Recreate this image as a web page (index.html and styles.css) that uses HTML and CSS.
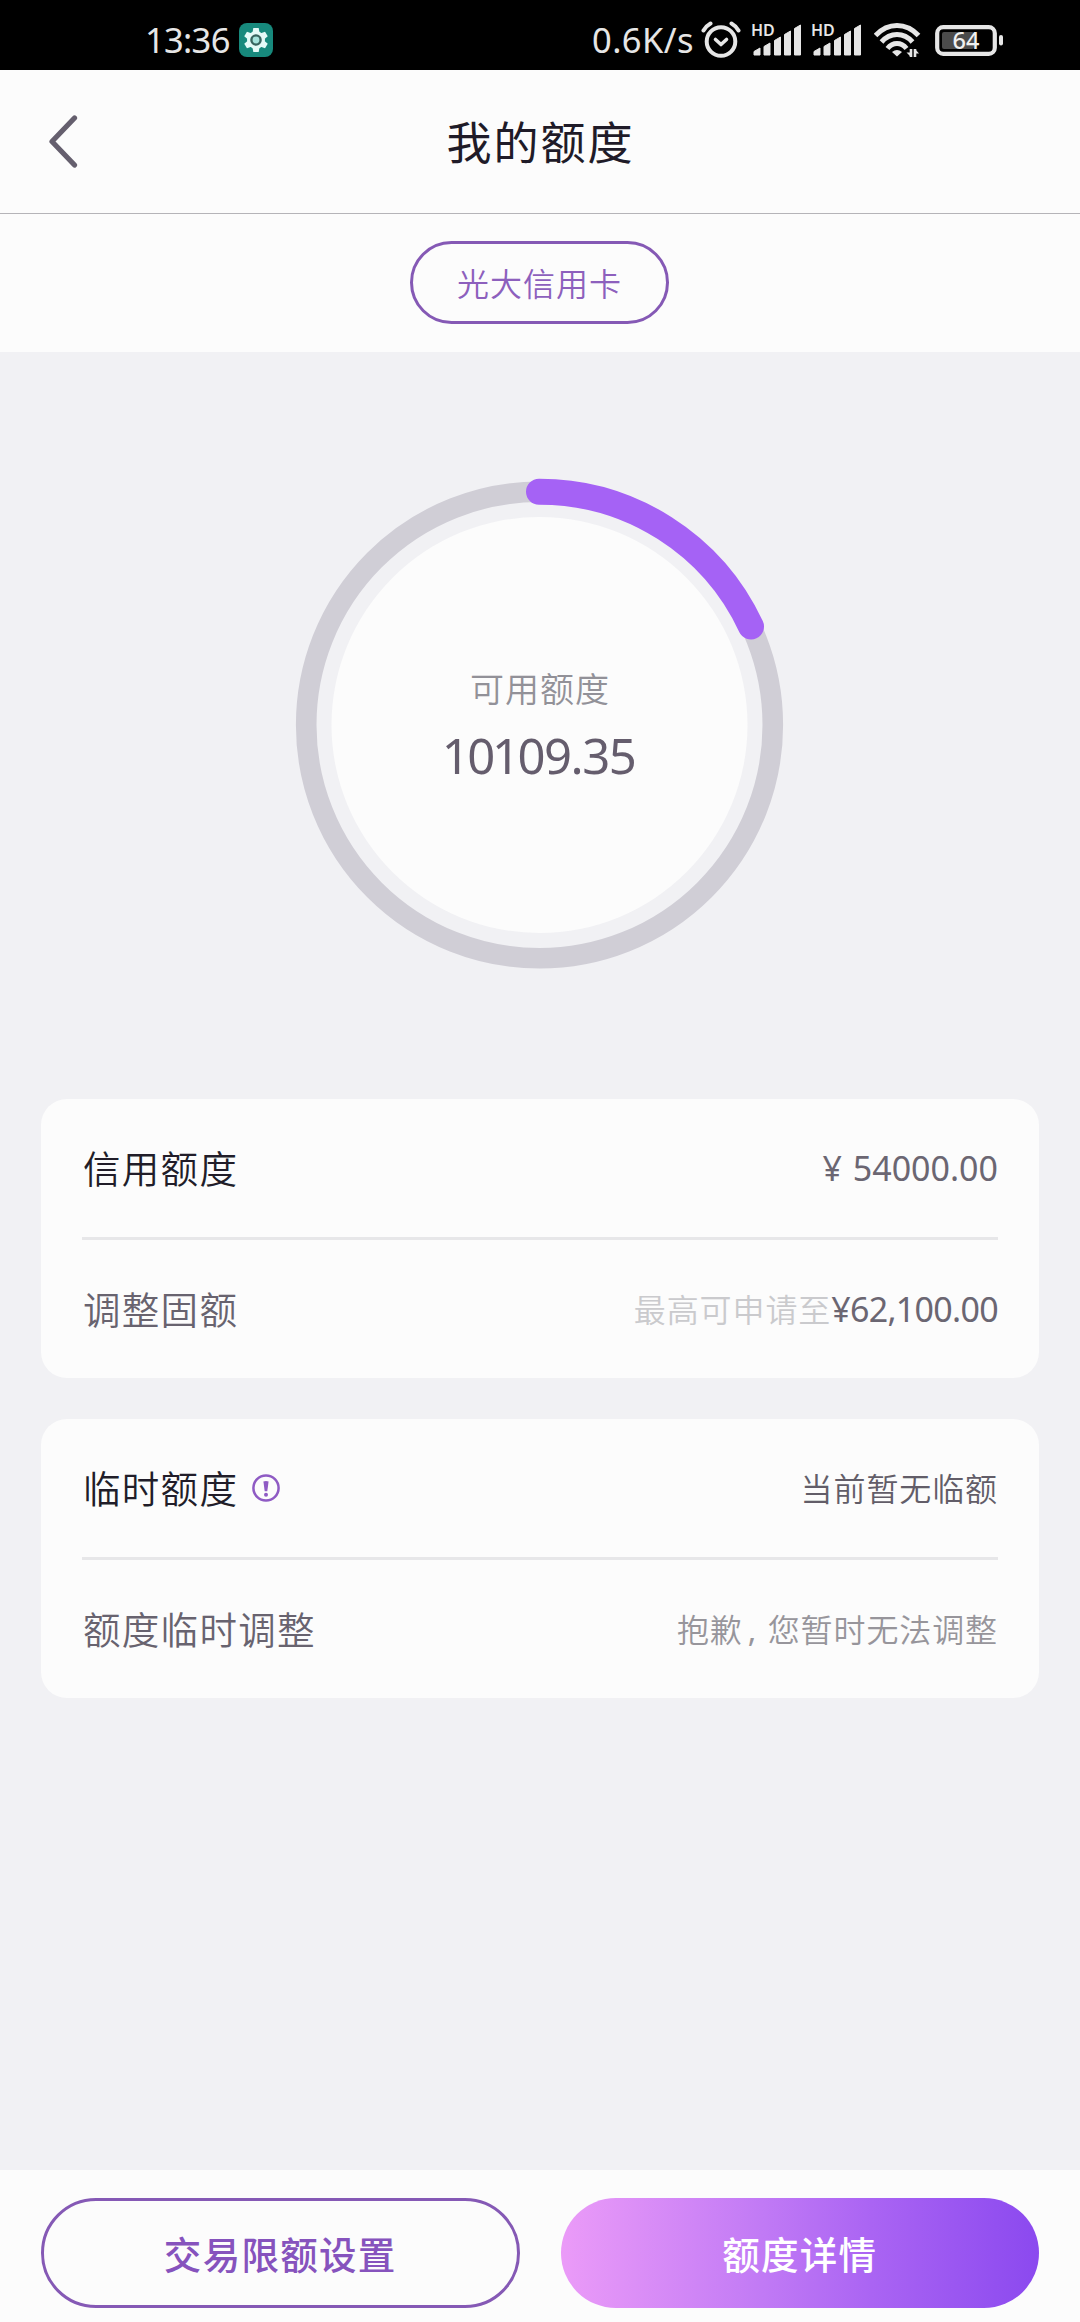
FILE: index.html
```html
<!DOCTYPE html>
<html lang="zh-CN">
<head>
<meta charset="utf-8">
<title>我的额度</title>
<link rel="stylesheet" href="styles.css">
</head>
<body>
<div class="screen">
  <div class="status">
    <span class="clock">13:36</span>
    <svg class="gear" width="34" height="34" viewBox="0 0 34 34">
      <rect width="34" height="34" rx="8" fill="#17897c"/>
      <g fill="#e4faf7">
        <circle cx="17" cy="17" r="9"/>
        <path d="M14.3 5h5.4l1 6h-7.4z"/>
        <path d="M14.3 5h5.4l1 6h-7.4z" transform="rotate(60 17 17)"/>
        <path d="M14.3 5h5.4l1 6h-7.4z" transform="rotate(120 17 17)"/>
        <path d="M14.3 5h5.4l1 6h-7.4z" transform="rotate(180 17 17)"/>
        <path d="M14.3 5h5.4l1 6h-7.4z" transform="rotate(240 17 17)"/>
        <path d="M14.3 5h5.4l1 6h-7.4z" transform="rotate(300 17 17)"/>
      </g>
      <circle cx="17" cy="17" r="4.6" fill="#a5e3dc" stroke="#38655f" stroke-width="2.4"/>
    </svg>
    <span class="speed">0.6K/s</span>
    <svg class="alarm" width="40" height="38" viewBox="0 0 40 38" fill="none" stroke="#e6e6e6" stroke-linecap="round">
      <circle cx="20" cy="20.5" r="14.3" stroke-width="4"/>
      <path d="M14.500 18.500l5.500 5 5.500-5" stroke-width="3.600" stroke-linejoin="round"/>
      <path d="M2.500 9.500Q5 5 9.500 2.500M37.500 9.500Q35 5 30.500 2.500" stroke-width="4"/>
    </svg>
    <div class="signal">
      <span class="hd">HD</span>
      <svg width="52" height="34" viewBox="0 0 52 34" fill="#e6e6e6">
        <path d="M3 28.500l6-3.500v7h-6z M13 23.500l6-3.500v12h-6z M23.500 17.500l6-3.500v18h-6z M33.500 11.500l6-3.500v24h-6z M43.500 5.500l6-3.500v30h-6z" stroke="#e6e6e6" stroke-linejoin="round"/>
      </svg>
    </div>
    <div class="signal second">
      <span class="hd">HD</span>
      <svg width="52" height="34" viewBox="0 0 52 34" fill="#e6e6e6">
        <path d="M3 28.500l6-3.500v7h-6z M13 23.500l6-3.500v12h-6z M23.500 17.500l6-3.500v18h-6z M33.500 11.500l6-3.500v24h-6z M43.500 5.500l6-3.500v30h-6z" stroke="#e6e6e6" stroke-linejoin="round"/>
      </svg>
    </div>
    <svg class="wifi" width="47" height="35" viewBox="0 0 47 35" fill="none" stroke="#e6e6e6">
      <path d="M1.500 12.500Q11 2.500 23 2.500T44.500 12.500M7.500 19Q14 11.500 23 11.500T38.500 19M13.500 25.500Q17.500 20.500 23 20.500T32.500 25.500" stroke-width="5"/>
      <path d="M18 29q5-4 10 0l-5 4.500z" fill="#e6e6e6" stroke="none"/>
      <path d="M37 26v8M41 34v-8" stroke-width="2.600"/>
      <path d="M32.500 29.500l4.500 4.500v-4.500zM45 30.500l-4-4.500v4.500z" fill="#e6e6e6" stroke="none"/>
    </svg>
    <div class="battery">
      <svg width="70" height="32" viewBox="0 0 70 32">
        <rect x="3.200" y="3.200" width="57.600" height="26.600" rx="6" fill="none" stroke="#e6e6e6" stroke-width="4.200"/>
        <rect x="8" y="8" width="32" height="17" rx="2" fill="#4b4b4b"/>
        <rect x="65" y="11" width="4" height="10.500" rx="2" fill="#e6e6e6"/>
      </svg>
      <span class="level">64</span>
    </div>
  </div>

  <header class="nav">
    <svg width="32" height="54" viewBox="0 0 32 54" fill="none" stroke="#655f6e" stroke-width="5.200" stroke-linecap="round" stroke-linejoin="round">
      <path d="M27.500 3L5 26.500 27.500 50"/>
    </svg>
    <h1>我的额度</h1>
  </header>

  <div class="tabs"><span class="chip">光大信用卡</span></div>

  <main class="content">
    <div class="gauge">
      <svg width="514" height="514" viewBox="-256.500 -257 514 514" fill="none">
        <circle r="208" fill="#fcfcfc"/>
        <circle r="233.300" stroke="#d0ced6" stroke-width="20.600"/>
        <path d="M-0.500 -233.300A233.300 233.300 0 0 1 211.500 -98.500" stroke="#a562f5" stroke-width="26" stroke-linecap="round"/>
      </svg>
      <div class="gauge-text">
        <span class="gauge-label">可用额度</span>
        <span class="gauge-value"><span class="one">1</span>0<span class="one">1</span>09.35</span>
      </div>
    </div>

    <section class="card">
      <div class="row">
        <span class="name strong">信用额度</span>
        <span class="amount"><span class="yen">¥</span> 54000.00</span>
      </div>
      <div class="row">
        <span class="name">调整固额</span>
        <span class="offer"><span class="hint">最高可申请至</span><span class="amount tight">¥62,100.00</span></span>
      </div>
    </section>

    <section class="card">
      <div class="row">
        <span class="name strong">临时额度</span>
        <svg class="info" width="28" height="28" viewBox="0 0 28 28">
          <circle cx="14" cy="14" r="12.600" fill="none" stroke="#8f5bc4" stroke-width="2.500"/>
          <path d="M11.400 7.500q2.600-1.200 5.200 0l-1.300 9.800h-2.600z" fill="#8f5bc4"/>
          <circle cx="14" cy="20.700" r="2" fill="#8f5bc4"/>
        </svg>
        <span class="note">当前暂无临额</span>
      </div>
      <div class="row">
        <span class="name">额度临时调整</span>
        <span class="note muted">抱歉<span class="comma">,</span>您暂时无法调整</span>
      </div>
    </section>
  </main>

  <footer class="actions">
    <button class="btn outline">交易限额设置</button>
    <button class="btn filled">额度详情</button>
  </footer>
</div>
</body>
</html>
```
FILE: styles.css
```css
* { box-sizing: border-box; }
body {
  margin: 0;
  font-family: "Noto Sans", "Noto Sans CJK SC", sans-serif;
}
svg { display: block; flex: none; }
.screen {
  width: 1080px;
  height: 2322px;
  display: flex;
  flex-direction: column;
  background: #f1f1f4;
  overflow: hidden;
}

.status {
  height: 70px;
  flex: none;
  display: flex;
  align-items: flex-start;
  padding: 0 76px 0 145px;
  background: #000;
  color: #e6e6e6;
  font-size: 34.5px;
  line-height: 48px;
}
.clock, .speed { padding-top: 16px; white-space: nowrap; }
.clock { width: 94px; letter-spacing: -0.7px; }
.gear { margin-top: 23px; }
.speed { margin-left: auto; width: 109px; letter-spacing: 0.4px; }
.alarm { margin-top: 21px; margin-right: 10px; }
.signal { display: grid; margin-top: 23px; margin-right: 8px; }
.signal > *, .battery > * { grid-area: 1 / 1; }
.signal.second { margin-right: 11px; }
.hd {
  height: 16px;
  font-size: 16px;
  line-height: 15px;
  font-weight: 600;
}
.wifi { margin-top: 23px; margin-right: 13px; }
.battery { display: grid; margin-top: 24px; }
.level {
  width: 64px;
  font-size: 23.5px;
  line-height: 33px;
  font-weight: 500;
  text-align: center;
  color: #f0f0f0;
}

.nav {
  height: 144px;
  flex: none;
  display: grid;
  grid-template-columns: 32px 1fr 32px;
  align-items: center;
  padding: 0 48px;
  background: #fcfcfc;
  border-bottom: 1px solid #b5b4b8;
}
.nav svg { margin-left: -1px; }
.nav h1 {
  margin: 0;
  padding: 2px 0 0 1px;
  text-align: center;
  font-size: 45px;
  font-weight: 400;
  line-height: 60px;
  letter-spacing: 2px;
  color: #1f1b28;
}

.tabs {
  height: 138px;
  flex: none;
  display: flex;
  justify-content: center;
  align-items: flex-start;
  padding-top: 27px;
  padding-right: 1px;
  background: #fcfcfc;
}
.chip {
  width: 259px;
  height: 83px;
  border: 3px solid #8559b5;
  border-radius: 42px;
  color: #8d60bd;
  font-size: 32px;
  letter-spacing: 1px;
  font-weight: 350;
  line-height: 79px;
  text-align: center;
}

.content {
  flex: 1;
  display: flex;
  flex-direction: column;
  gap: 41px;
  padding: 116px 41px 0;
}
.gauge {
  height: 514px;
  margin-bottom: 76px;
  display: grid;
  justify-items: center;
}
.gauge > * { grid-area: 1 / 1; }
.gauge-text {
  display: flex;
  flex-direction: column;
  align-items: center;
  padding-top: 199px;
}
.gauge-label {
  font-size: 34px;
  line-height: 44px;
  letter-spacing: 1px;
  font-weight: 350;
  color: #929198;
}
.gauge-value {
  margin-top: 12px;
  padding-right: 1px;
  font-size: 49px;
  line-height: 64px;
  letter-spacing: -1.5px;
  color: #655d6d;
}
.one { margin: 0 -0.02em 0 -0.04em; }

.card {
  height: 279px;
  border-radius: 26px;
  background: #fcfcfc;
  padding: 0 41px;
}
.row {
  height: 138px;
  display: flex;
  align-items: center;
}
.row + .row { height: 141px; border-top: 3px solid #e7e7e9; }
.row > :last-child { margin-left: auto; }
.name {
  padding: 2px 0 0 1px;
  font-size: 37.5px;
  letter-spacing: 1.3px;
  line-height: 56px;
  font-weight: 350;
  color: #68636f;
}
.name.strong { color: #211d29; }
.amount {
  font-size: 34px;
  line-height: 48px;
  color: #6b6672;
}
.amount.tight { letter-spacing: -0.7px; }
.yen { margin-right: 2px; }
.offer { display: flex; align-items: center; }
.hint, .note {
  font-size: 32px;
  letter-spacing: 0.9px;
  line-height: 48px;
  font-weight: 350;
}
.hint { color: #cacacd; padding-top: 1px; }
.note { color: #625d68; padding-top: 1px; }
.note.muted { color: #97959b; }
.comma { display: inline-block; width: 25px; padding-left: 5px; font-weight: 400; }
.info { margin-left: 14px; }

.actions {
  height: 152px;
  flex: none;
  display: grid;
  grid-template-columns: 1fr 1fr;
  align-items: start;
  gap: 41px;
  padding: 28px 41px 0;
  background: #fcfcfc;
}
.btn {
  height: 110px;
  padding: 0 0 2px;
  border: 0;
  border-radius: 55px;
  font-family: inherit;
  font-size: 37.5px;
  font-weight: 500;
  letter-spacing: 1.3px;
}
.btn.outline { background: none; border: 3px solid #8559b5; color: #8653bd; }
.btn.filled {
  color: #fff;
  background: linear-gradient(90deg, #eb9bf8 0%, #c17af5 42%, #aa64f3 65%, #8b49ef 100%);
}
```
